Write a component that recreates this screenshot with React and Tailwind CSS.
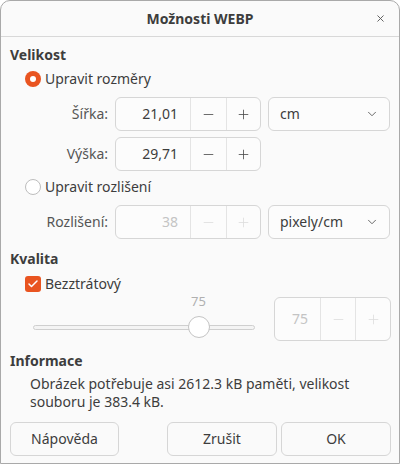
import { ChevronDown, Minus, Plus, X, Check } from 'lucide-react';

const font = { fontFamily: '"Noto Sans", "DejaVu Sans", sans-serif' };

const SpinBox = ({ value, disabled, className = '', minusW = 'w-[36px]', plusW = 'w-[34px]' }) => (
  <div
    className={`flex h-[34px] shrink-0 rounded-[6px] border border-[#d6d6d6] bg-[#fcfcfc] ${className}`}
  >
    <div
      className={`flex flex-1 items-center justify-end pr-[12px] text-[14px] leading-[20px] ${
        disabled ? 'text-[#c4c4c4]' : 'text-[#3d3d3d]'
      }`}
    >
      {value}
    </div>
    <div
      className={`flex ${minusW} items-center justify-center border-l border-[#e4e4e4] ${
        disabled ? 'text-[#dddddd]' : 'text-[#4a4a4a]'
      }`}
    >
      <Minus className="h-[15px] w-[15px]" strokeWidth={1.3} />
    </div>
    <div
      className={`flex ${plusW} items-center justify-center border-l border-[#e4e4e4] ${
        disabled ? 'text-[#dddddd]' : 'text-[#4a4a4a]'
      }`}
    >
      <Plus className="h-[15px] w-[15px]" strokeWidth={1.3} />
    </div>
  </div>
);

const Combo = ({ label }) => (
  <div className="ml-[7px] flex h-[34px] w-[122px] shrink-0 items-center justify-between rounded-[6px] border border-[#d6d6d6] bg-[#fcfcfc] pl-[11px] pr-[10px] text-[14px] leading-[20px] text-[#3d3d3d]">
    <span>{label}</span>
    <ChevronDown className="h-[14px] w-[14px] text-[#555]" strokeWidth={1.5} />
  </div>
);

const Row = ({ label, children }) => (
  <div className="flex items-center">
    <div className="w-[98px] shrink-0 text-right text-[14px] leading-[20px] text-[#555555]">{label}</div>
    <div className="ml-[7px] flex">{children}</div>
  </div>
);

const Button = ({ children, className = '' }) => (
  <div
    className={`flex h-[34px] shrink-0 items-center justify-center rounded-[6px] border border-[#d6d6d6] bg-[#fafafa] text-[14px] leading-[20px] text-[#3d3d3d] ${className}`}
  >
    {children}
  </div>
);

export default function App() {
  return (
    <div className="h-[465px] w-[400px] bg-white" style={font}>
      <div className="flex h-[464px] flex-col overflow-hidden rounded-t-[10px] border border-[#a9a9a9] bg-[#fafafa]">
        {/* Title bar */}
        <div className="relative flex h-[36px] shrink-0 items-center justify-center border-b border-[#d8d8d8]">
          <span className="text-[14px] font-bold leading-[20px] text-[#3d3d3d]">Možnosti WEBP</span>
          <X className="absolute right-[13px] top-[12px] h-[11px] w-[11px] text-[#555]" strokeWidth={2} />
        </div>

        <div className="flex flex-1 flex-col px-[9px]">
          <div className="mt-[8px] text-[14px] font-bold leading-[20px] text-[#3d3d3d]">Velikost</div>

          <div className="mt-[4px] flex h-[20px] items-center pl-[15px]">
            <div className="flex h-[16px] w-[16px] items-center justify-center rounded-full bg-[#e95420]">
              <div className="h-[6px] w-[6px] rounded-full bg-white" />
            </div>
            <span className="ml-[4px] text-[14px] leading-[20px] text-[#3d3d3d]">Upravit rozměry</span>
          </div>

          <div className="mt-[8px]">
            <Row label="Šířka:">
              <SpinBox value="21,01" className="w-[146px]" />
              <Combo label="cm" />
            </Row>
          </div>
          <div className="mt-[6px]">
            <Row label="Výška:">
              <SpinBox value="29,71" className="w-[146px]" />
            </Row>
          </div>

          <div className="mt-[6px] flex h-[20px] items-center pl-[15px]">
            <div className="h-[16px] w-[16px] rounded-full border border-[#bdbdbd] bg-white" />
            <span className="ml-[4px] text-[14px] leading-[20px] text-[#3d3d3d]">Upravit rozlišení</span>
          </div>

          <div className="mt-[8px]">
            <Row label="Rozlišení:">
              <SpinBox value="38" disabled className="w-[146px]" />
              <Combo label="pixely/cm" />
            </Row>
          </div>

          <div className="mt-[10px] text-[14px] font-bold leading-[20px] text-[#3d3d3d]">Kvalita</div>

          <div className="mt-[5px] flex h-[20px] items-center pl-[15px]">
            <div className="flex h-[16px] w-[16px] items-center justify-center rounded-[3px] bg-[#e95420]">
              <Check className="h-[12px] w-[12px] text-white" strokeWidth={3} />
            </div>
            <span className="ml-[4px] text-[14px] leading-[20px] text-[#3d3d3d]">Bezztrátový</span>
          </div>

          <div className="mt-[3px] flex items-start">
            <div className="relative ml-[23px] h-[44px] w-[222px] shrink-0">
              <div className="absolute left-[158px] top-[-4px] text-[13px] leading-[16px] text-[#b0b0b0]">75</div>
              <div className="absolute left-0 right-0 top-[28px] h-[5px] rounded-full border border-[#cfcfcf] bg-[#f4f4f4]" />
              <div className="absolute left-[155px] top-[19px] h-[22px] w-[22px] rounded-full border border-[#c4c4c4] bg-white" />
            </div>
            <SpinBox value="75" disabled className="ml-[19px] !h-[44px] w-[117px]" minusW="w-[35px]" plusW="w-[35px]" />
          </div>

          <div className="mt-[10px] text-[14px] font-bold leading-[20px] text-[#3d3d3d]">Informace</div>
          <div className="mt-[4px] pl-[20px] text-[14px] leading-[18px] text-[#3d3d3d]">
            Obrázek potřebuje asi 2612.3 kB paměti, velikost
            <br />
            souboru je 383.4 kB.
          </div>

          <div className="mt-[11px] flex">
            <Button className="w-[109px]">Nápověda</Button>
            <Button className="ml-[48px] w-[110px]">Zrušit</Button>
            <Button className="ml-[4px] w-[110px]">OK</Button>
          </div>
        </div>
      </div>
    </div>
  );
}
